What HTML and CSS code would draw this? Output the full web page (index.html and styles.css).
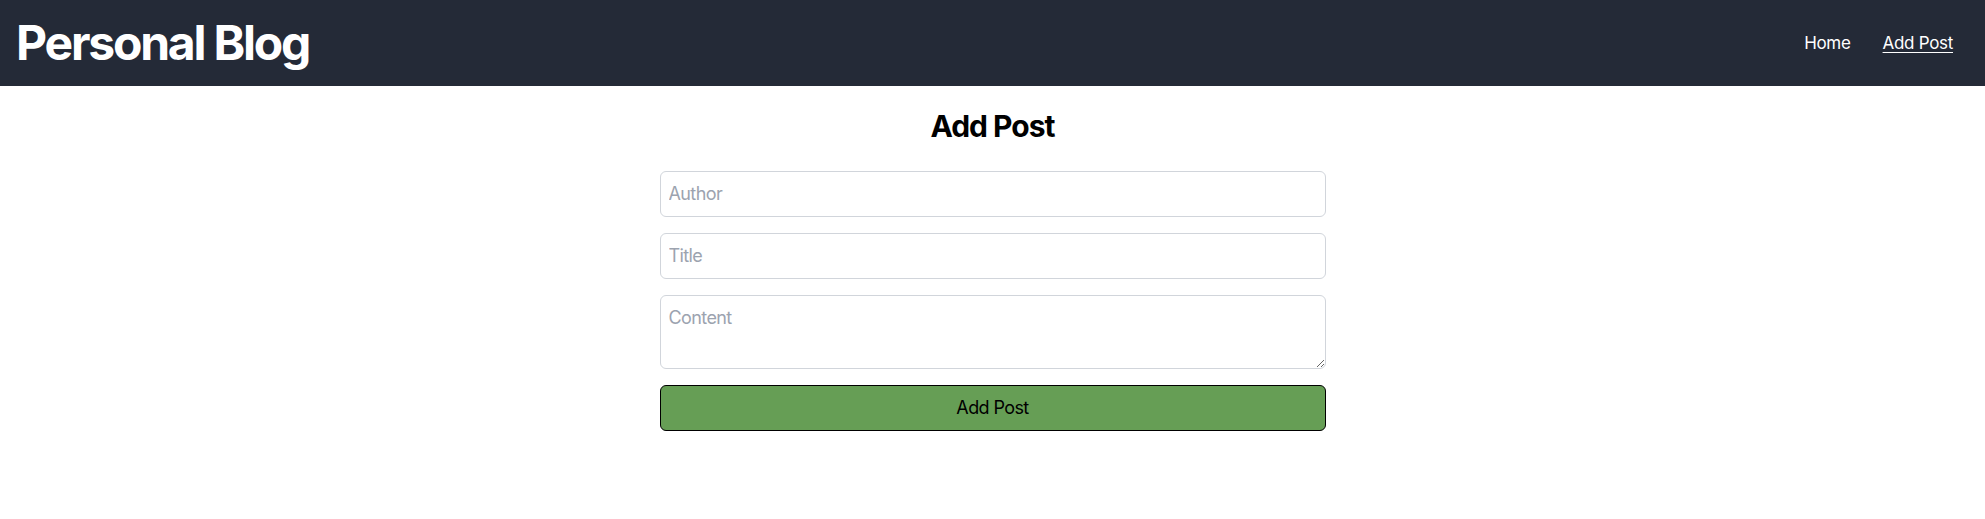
FILE: index.html
```html
<!DOCTYPE html>
<html lang="en">
<head>
<meta charset="utf-8">
<title>Personal Blog</title>
<link rel="stylesheet" href="styles.css">
</head>
<body>
<header class="topbar">
  <h1 class="brand">Personal Blog</h1>
  <nav class="nav">
    <a class="nav-link" href="#">Home</a>
    <a class="nav-link active" href="#">Add Post</a>
  </nav>
</header>
<main class="page">
  <h2 class="page-title">Add Post</h2>
  <form class="post-form">
    <input class="field" type="text" placeholder="Author">
    <input class="field" type="text" placeholder="Title">
    <textarea class="field area" rows="2" placeholder="Content"></textarea>
    <button class="submit" type="button">Add Post</button>
  </form>
</main>
</body>
</html>
```

FILE: styles.css
```css
* { box-sizing: border-box; }
html, body { margin: 0; padding: 0; }
body {
  font-family: Inter, "Noto Sans", "Liberation Sans", sans-serif;
  color: #000;
  background: #fff;
}
.topbar {
  display: flex;
  align-items: center;
  justify-content: space-between;
  background: #242a37;
  color: #fff;
  padding: 19px 16px;
}
.brand {
  margin: 0;
  font-size: 48px;
  line-height: 48px;
  font-weight: 700;
  letter-spacing: -2.2px;
}
.nav { display: flex; }
.nav-link {
  color: #fff;
  text-decoration: none;
  font-size: 17px;
  line-height: 24px;
  letter-spacing: -0.3px;
  padding: 0 16px;
}
.nav-link.active { text-decoration: underline; text-underline-offset: 3px; }
.page {
  display: flex;
  flex-direction: column;
  align-items: center;
  padding-top: 22px;
}
.page-title {
  margin: 0 0 27px;
  font-size: 30px;
  line-height: 36px;
  font-weight: 700;
  letter-spacing: -1px;
}
.post-form {
  width: 666px;
  display: flex;
  flex-direction: column;
  gap: 16px;
}
.field {
  display: block;
  width: 100%;
  font-family: inherit;
  font-size: 18px;
  line-height: 28px;
  letter-spacing: -0.6px;
  padding: 8px;
  border: 1px solid #d1d5db;
  border-radius: 6px;
  color: #111;
  background: #fff;
  outline: none;
}
.field::placeholder { color: #9ca3af; }
.area { height: 74px; resize: vertical; }
.submit {
  font-family: inherit;
  font-size: 18px;
  line-height: 28px;
  letter-spacing: -0.6px;
  padding: 8px;
  background: #669e55;
  color: #000;
  border: 1px solid #000;
  border-radius: 6px;
  cursor: pointer;
}
```
